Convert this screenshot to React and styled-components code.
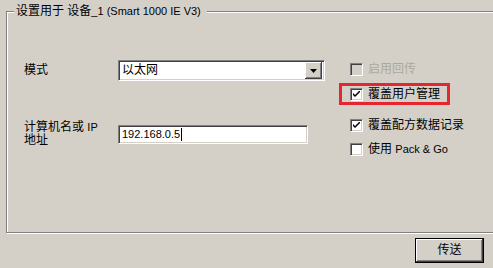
import React from 'react';
import styled, { createGlobalStyle } from 'styled-components';

const GlobalStyle = createGlobalStyle`
  html, body {
    margin: 0;
    padding: 0;
    background: #d4d0c8;
  }
`

const Window = styled.div`
  width: 493px;
  height: 268px;
  overflow: hidden;
  background: #d4d0c8;
  display: flex;
  flex-direction: column;
  font-family: "Liberation Sans", "Noto Sans CJK SC", sans-serif;
  font-size: 12px;
  line-height: 13px;
  color: #000;
`

const Group = styled.div`
  position: relative;
  margin: 11px -40px 0 6px;
  height: 222px;
  box-sizing: border-box;
  border: 1px solid #808080;
  box-shadow: inset 1px 1px #fff, 1px 1px #fff;
  display: flex;
`

const Legend = styled.div`
  position: absolute;
  left: 7px;
  top: -8px;
  padding: 0 6px 0 2px;
  background: #d4d0c8;
  line-height: 15px;
  white-space: nowrap;
`

const Lat = styled.span`
  font-family: "Liberation Sans", Arial, sans-serif;
  font-size: 11px;
`

const Form = styled.div`
  display: flex;
  flex-direction: column;
  padding: 48px 0 0 17px;
`

const FormRow = styled.div`
  display: flex;
  align-items: center;
  margin-top: ${(p) => p.$mt || 0}px;
`

const Label = styled.div`
  width: 94px;
  flex-shrink: 0;
`

const Sunken = styled.div`
  box-sizing: border-box;
  background: #fff;
  border-style: solid;
  border-width: 1px;
  border-color: #808080 #fff #fff #808080;
  box-shadow: inset 1px 1px #404040, inset -1px -1px #d4d0c8;
  display: flex;
  align-items: center;
`

const Combo = styled(Sunken)`
  width: 207px;
  height: 21px;
  padding: 2px 2px 2px 3px;
`

const ComboText = styled.span`
  flex: 1;
`

const ArrowBtn = styled.div`
  width: 17px;
  height: 17px;
  box-sizing: border-box;
  background: #d4d0c8;
  box-shadow: inset -1px -1px #404040, inset 1px 1px #fff, inset -2px -2px #808080;
  display: flex;
  align-items: center;
  justify-content: center;
`

const Input = styled(Sunken)`
  width: 190px;
  height: 19px;
  padding: 0 3px;
`

const Caret = styled.span`
  display: inline-block;
  width: 1px;
  height: 13px;
  margin-left: 1px;
  background: #000;
`

const Checks = styled.div`
  display: flex;
  flex-direction: column;
  align-items: flex-start;
  margin-left: 14px;
  padding-top: 49px;
`

const CheckRow = styled.div`
  display: flex;
  align-items: center;
  gap: 5px;
  box-sizing: border-box;
  height: ${(p) => (p.$highlight ? 22 : 16)}px;
  margin-top: ${(p) => p.$mt || 0}px;
  padding: ${(p) => (p.$highlight ? '0 7px 0 8px' : '0 0 0 11px')};
  border: ${(p) => (p.$highlight ? '3px solid #e3262f' : 'none')};
  color: ${(p) => (p.$disabled ? '#aca899' : '#000')};
  white-space: nowrap;
`

const Box = styled.span`
  width: 13px;
  height: 13px;
  box-sizing: border-box;
  flex-shrink: 0;
  background: ${(p) => (p.$disabled ? '#d4d0c8' : '#fff')};
  border-style: solid;
  border-width: 1px;
  border-color: #808080 #fff #fff #808080;
  box-shadow: inset 1px 1px #404040, inset -1px -1px #d4d0c8;
  display: flex;
  align-items: center;
  justify-content: center;
`

const Footer = styled.div`
  display: flex;
  justify-content: flex-end;
  padding: 5px 9px 0 0;
`

const Button = styled.button`
  width: 69px;
  height: 25px;
  box-sizing: border-box;
  background: #d4d0c8;
  border: 1px solid #000;
  box-shadow: inset -1px -1px #404040, inset 1px 1px #fff, inset -2px -2px #808080;
  font: inherit;
  padding: 0;
  color: #000;
`

const Check = ({ checked, disabled, highlight, mt, children }) => (
  <CheckRow $highlight={highlight} $disabled={disabled} $mt={mt}>
    <Box $disabled={disabled}>
      {checked && (
        <svg width="7" height="7" viewBox="0 0 7 7">
          <path d="M0 2 L2 4 L7 -1 L7 1 L2 6 L0 4 Z" fill="#000" />
        </svg>
      )}
    </Box>
    <span>{children}</span>
  </CheckRow>
)

const App = () => {
  return (
    <Window>
      <GlobalStyle />
      <Group>
        <Legend>
          设置用于 设备<Lat>_1 (Smart 1000 IE V3)</Lat>
        </Legend>
        <Form>
          <FormRow>
            <Label>模式</Label>
            <Combo>
              <ComboText>以太网</ComboText>
              <ArrowBtn>
                <svg width="7" height="4" viewBox="0 0 7 4">
                  <path d="M0 0 H7 L3.5 4 Z" fill="#000" />
                </svg>
              </ArrowBtn>
            </Combo>
          </FormRow>
          <FormRow $mt={40}>
            <Label>
              计算机名或 <Lat>IP</Lat>
              <br />
              地址
            </Label>
            <Input>
              <Lat>192.168.0.5</Lat>
              <Caret />
            </Input>
          </FormRow>
        </Form>
        <Checks>
          <Check disabled>启用回传</Check>
          <Check checked highlight mt={6}>覆盖用户管理</Check>
          <Check checked mt={12}>覆盖配方数据记录</Check>
          <Check mt={8}>
            使用 <Lat>Pack &amp; Go</Lat>
          </Check>
        </Checks>
      </Group>
      <Footer>
        <Button>传送</Button>
      </Footer>
    </Window>
  );
};

export default App;
